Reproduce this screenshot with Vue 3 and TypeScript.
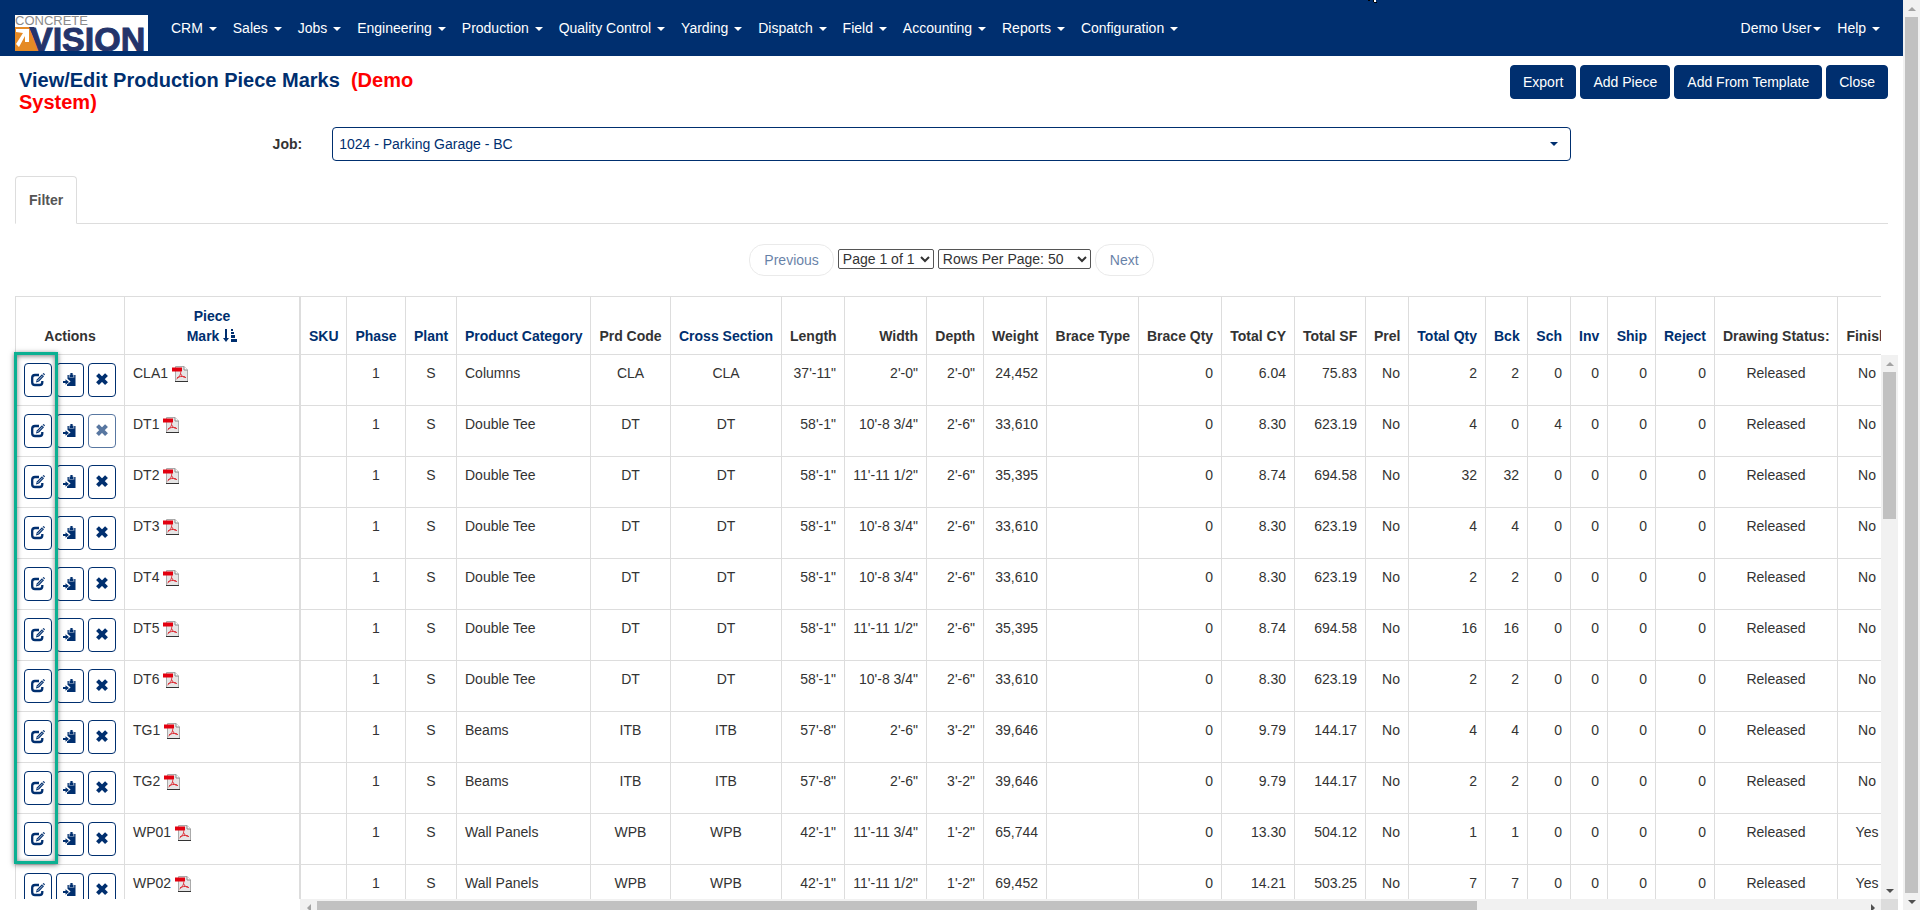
<script setup lang="ts">
type Align = 'left' | 'center' | 'right'

interface Column {
  title: string
  width: number
  align: Align
  sortable?: boolean
}

interface Piece {
  mark: string
  locked?: boolean
  cells: string[]
}

const menus: string[] = [
  'CRM', 'Sales', 'Jobs', 'Engineering', 'Production', 'Quality Control',
  'Yarding', 'Dispatch', 'Field', 'Accounting', 'Reports', 'Configuration',
]

const actions: string[] = ['Export', 'Add Piece', 'Add From Template', 'Close']

const columns: Column[] = [
  { title: 'SKU', width: 46, align: 'center', sortable: true },
  { title: 'Phase', width: 59, align: 'center', sortable: true },
  { title: 'Plant', width: 51, align: 'center', sortable: true },
  { title: 'Product Category', width: 134, align: 'left', sortable: true },
  { title: 'Prd Code', width: 80, align: 'center' },
  { title: 'Cross Section', width: 111, align: 'center', sortable: true },
  { title: 'Length', width: 63, align: 'right' },
  { title: 'Width', width: 82, align: 'right' },
  { title: 'Depth', width: 57, align: 'right' },
  { title: 'Weight', width: 63, align: 'right' },
  { title: 'Brace Type', width: 92, align: 'right' },
  { title: 'Brace Qty', width: 83, align: 'right' },
  { title: 'Total CY', width: 73, align: 'right' },
  { title: 'Total SF', width: 71, align: 'right' },
  { title: 'Prel', width: 43, align: 'right' },
  { title: 'Total Qty', width: 77, align: 'right', sortable: true },
  { title: 'Bck', width: 42, align: 'right', sortable: true },
  { title: 'Sch', width: 43, align: 'right', sortable: true },
  { title: 'Inv', width: 37, align: 'right', sortable: true },
  { title: 'Ship', width: 48, align: 'right', sortable: true },
  { title: 'Reject', width: 59, align: 'right', sortable: true },
  { title: 'Drawing Status:', width: 123, align: 'center' },
  { title: 'Finish', width: 59, align: 'center' },
]

const tableWidth = columns.reduce((sum, c) => sum + c.width, 1)

function piece(
  mark: string, category: string, code: string, dims: string[],
  cy: string, sf: string, qty: number[], finish = 'No', locked = false,
): Piece {
  const [length, width, depth, weight] = dims
  const [total, backlog, scheduled] = qty
  return {
    mark,
    locked,
    cells: [
      '', '1', 'S', category, code, code, length, width, depth, weight, '', '0',
      cy, sf, 'No', String(total), String(backlog), String(scheduled), '0', '0', '0',
      'Released', finish,
    ],
  }
}

const narrowTee = ['58\'-1"', '10\'-8 3/4"', '2\'-6"', '33,610']
const wideTee = ['58\'-1"', '11\'-11 1/2"', '2\'-6"', '35,395']
const girder = ['57\'-8"', '2\'-6"', '3\'-2"', '39,646']

const pieces: Piece[] = [
  piece('CLA1', 'Columns', 'CLA', ['37\'-11"', '2\'-0"', '2\'-0"', '24,452'], '6.04', '75.83', [2, 2, 0]),
  piece('DT1', 'Double Tee', 'DT', narrowTee, '8.30', '623.19', [4, 0, 4], 'No', true),
  piece('DT2', 'Double Tee', 'DT', wideTee, '8.74', '694.58', [32, 32, 0]),
  piece('DT3', 'Double Tee', 'DT', narrowTee, '8.30', '623.19', [4, 4, 0]),
  piece('DT4', 'Double Tee', 'DT', narrowTee, '8.30', '623.19', [2, 2, 0]),
  piece('DT5', 'Double Tee', 'DT', wideTee, '8.74', '694.58', [16, 16, 0]),
  piece('DT6', 'Double Tee', 'DT', narrowTee, '8.30', '623.19', [2, 2, 0]),
  piece('TG1', 'Beams', 'ITB', girder, '9.79', '144.17', [4, 4, 0]),
  piece('TG2', 'Beams', 'ITB', girder, '9.79', '144.17', [2, 2, 0]),
  piece('WP01', 'Wall Panels', 'WPB', ['42\'-1"', '11\'-11 3/4"', '1\'-2"', '65,744'], '13.30', '504.12', [1, 1, 0], 'Yes'),
  piece('WP02', 'Wall Panels', 'WPB', ['42\'-1"', '11\'-11 1/2"', '1\'-2"', '69,452'], '14.21', '503.25', [7, 7, 0], 'Yes'),
]
</script>

<template>
  <div class="window">
    <div class="page">
      <header class="navbar">
        <a href="#" class="logo" aria-label="Concrete Vision home">
          <svg width="133" height="36" viewBox="0 0 133 36" aria-hidden="true">
            <rect width="133" height="36" fill="#fff" />
            <text x="0" y="10" font-family="Liberation Sans, Arial, sans-serif" font-size="13" fill="#8a8a8a">CONCRETE</text>
            <path d="M0 12h17l7 24H0z" fill="#e58a25" />
            <path d="M1 17V14h13v13h-4v-6L4 32l-3-3 7-11z" fill="#fff" />
            <path d="M14 12h5l6 17v7z" fill="#24346b" />
            <text x="15" y="36" font-family="Liberation Sans, Arial, sans-serif" font-size="34" font-weight="700" fill="#24346b" stroke="#24346b">VISION</text>
          </svg>
        </a>
        <nav class="menu" aria-label="Main">
          <a v-for="m in menus" :key="m" href="#">{{ m }} <i class="caret"></i></a>
        </nav>
        <nav class="menu menu-user" aria-label="User">
          <a href="#">Demo User<i class="caret"></i></a>
          <a href="#">Help <i class="caret"></i></a>
        </nav>
        <svg class="pointer" width="9" height="3" viewBox="0 0 9 3" aria-hidden="true">
          <path d="M0 0h2v1H0zM5 0h1v2H5zM6 2h3v1H6z" fill="#000" />
          <path d="M6 0h2v2H6z" fill="#fff" />
        </svg>
      </header>

      <div class="title-row">
        <h1>View/Edit Production Piece Marks&nbsp; <span>(Demo System)</span></h1>
        <div class="toolbar">
          <button v-for="a in actions" :key="a" type="button" class="btn">{{ a }}</button>
        </div>
      </div>

      <div class="job-row">
        <label for="job">Job:</label>
        <div class="job-field">
          <select id="job">
            <option>1024 - Parking Garage - BC</option>
          </select>
          <i class="caret"></i>
        </div>
      </div>

      <div class="tabs"><a href="#" class="tab">Filter</a></div>

      <div class="pager">
        <button type="button" disabled>Previous</button>
        <select class="page-select" aria-label="Page"><option>Page 1 of 1</option></select>
        <select class="rows-select" aria-label="Rows per page"><option>Rows Per Page: 50</option></select>
        <button type="button" disabled>Next</button>
      </div>

      <div class="grid-area">
        <div class="frozen">
          <table>
            <colgroup><col class="col-actions"><col class="col-mark"></colgroup>
            <thead>
              <tr>
                <th scope="col">Actions</th>
                <th scope="col">
                  <a href="#">Piece<br>Mark
                    <svg class="sort" width="14" height="14" viewBox="0 0 14 14" aria-hidden="true">
                      <path d="M2 0h2v9h2l-3 4-3-4h2zM8 0h2v2H8zM8 3h3v2H8zM8 6h4v3H8zM8 10h6v3H8z" fill="currentColor" />
                    </svg>
                  </a>
                </th>
              </tr>
            </thead>
            <tbody>
              <tr v-for="p in pieces" :key="p.mark">
                <td>
                  <div class="row-actions">
                    <button type="button" :aria-label="`Edit ${p.mark}`">
                      <svg width="14" height="14" viewBox="0 0 14 14" aria-hidden="true">
                        <path d="M8 2H4Q1.200 2 1.200 4.800V9.200Q1.200 12 4 12H8.500Q11.300 12 11.300 9.200V8" fill="none" stroke="currentColor" stroke-width="2.300" />
                        <path d="M5 9.400l.8-3L11 1.200l2 2L8 8.600z" fill="currentColor" />
                        <path d="M11.700.8l.9-.8L14 1.300l-.7 1z" fill="currentColor" />
                        <path d="M6.400 8l5.200-5.300" stroke="#fff" stroke-width=".7" />
                      </svg>
                    </button>
                    <button type="button" :aria-label="`Copy ${p.mark}`">
                      <svg width="14" height="14" viewBox="0 0 14 14" aria-hidden="true">
                        <path d="M4.500 2h1.300v2.800h5.400V2h1.300v11H4v-1.400L7.600 8.600 4.500 5.800z" fill="currentColor" />
                        <path d="M6.500 4V1.800h.9V0h2.200v1.800h.9V4zM6 4.500h5v1.500H6z" fill="currentColor" />
                        <path d="M0 8h2.500V6.200L6 9l-3.500 2.800V10H0z" fill="currentColor" />
                      </svg>
                    </button>
                    <button type="button" :aria-label="`Delete ${p.mark}`" :disabled="p.locked">
                      <svg width="14" height="14" viewBox="0 0 14 14" aria-hidden="true">
                        <path d="M2.500 1.700l9 9M11.500 1.700l-9 9" stroke="currentColor" stroke-width="4" />
                      </svg>
                    </button>
                  </div>
                </td>
                <td class="mark">
                  {{ p.mark }}
                  <svg class="pdf" width="16" height="16" viewBox="0 0 16 16" aria-hidden="true">
                    <path d="M3.500.5H12L15.500 4v11.500H3.500z" fill="#e6e6e6" stroke="#aaa" />
                    <path d="M12 .5V4h3.500" fill="#fff" stroke="#888" />
                    <path d="M3 15.500h13" stroke="#333" />
                    <path d="M0 1.500h10v4H0z" fill="#e3000f" />
                    <path d="M8.500 5.500c.8 2.500-1.500 6-4 7.500M8.500 7.500c1 2.500 3 4 5.500 4M5 11.800c2.500-1.300 4.500-1.700 8-1" fill="none" stroke="#dd2a32" />
                  </svg>
                </td>
              </tr>
            </tbody>
          </table>
        </div>

        <div class="scroll-pane">
          <table :style="{ width: tableWidth + 'px' }">
            <colgroup><col v-for="c in columns" :key="c.title" :style="{ width: c.width + 'px' }"></colgroup>
            <thead>
              <tr>
                <th v-for="c in columns" :key="c.title" scope="col" :class="c.align">
                  <a v-if="c.sortable" href="#">{{ c.title }}</a>
                  <template v-else>{{ c.title }}</template>
                </th>
              </tr>
            </thead>
            <tbody>
              <tr v-for="p in pieces" :key="p.mark">
                <td v-for="(c, i) in columns" :key="c.title" :class="c.align">{{ p.cells[i] }}</td>
              </tr>
            </tbody>
          </table>
        </div>

        <div class="bar bar-y bar-rows" aria-hidden="true">
          <i class="arrow up dim"></i>
          <div class="thumb"></div>
          <i class="arrow down"></i>
        </div>
        <div class="bar bar-x" aria-hidden="true">
          <i class="arrow west dim"></i>
          <div class="thumb"></div>
          <i class="arrow east"></i>
        </div>
        <div class="corner"></div>
        <div class="highlight"></div>
      </div>
    </div>

    <div class="bar bar-y bar-window" aria-hidden="true">
      <i class="arrow up dim"></i>
      <div class="thumb"></div>
      <i class="arrow down"></i>
    </div>
  </div>
</template>

<style>
body {
  margin: 0;
  background: #fff;
}
</style>

<style scoped>
.window {
  --navy: #002f6f;
  --line: #ddd;
  display: grid;
  grid-template-columns: minmax(0, 1fr) 17px;
  height: 100vh;
  overflow: hidden;
  font: 14px/20px "Liberation Sans", Arial, sans-serif;
  color: #333;
}

.window *,
.window *::before {
  box-sizing: border-box;
}

a {
  color: var(--navy);
  text-decoration: none;
}

button,
select {
  font: inherit;
}

.page {
  display: flex;
  flex-direction: column;
  min-width: 0;
  min-height: 0;
}

.navbar {
  position: relative;
  display: flex;
  flex: none;
  height: 56px;
  padding: 0 15px;
  background: var(--navy);
}

.logo {
  margin: 15px 15px 0 0;
  height: 36px;
}

.logo svg {
  display: block;
}

.menu {
  display: flex;
  align-items: center;
  height: 56px;
  white-space: nowrap;
}

.menu a {
  padding: 0 8px;
  color: #fff;
}

.menu-user {
  margin-left: auto;
}

.caret {
  display: inline-block;
  margin-left: 2px;
  vertical-align: middle;
  border: 4px solid transparent;
  border-top-color: currentColor;
  border-bottom: 0;
}

.pointer {
  position: absolute;
  top: 0;
  left: 1368px;
}

.title-row {
  display: flex;
  justify-content: space-between;
  align-items: flex-start;
  padding: 9px 15px 0;
}

h1 {
  width: 24%;
  margin: 4px 0 0 4px;
  font-size: 20px;
  line-height: 22px;
  color: var(--navy);
}

h1 span {
  color: #f00;
}

.toolbar {
  display: flex;
  gap: 4px;
}

.btn {
  height: 34px;
  padding: 0 12px;
  border: 1px solid var(--navy);
  border-radius: 4px;
  background: var(--navy);
  color: #fff;
}

.job-row {
  display: grid;
  grid-template-columns: 2fr 8fr 2fr;
  align-items: center;
  margin-top: 14px;
}

.job-row label {
  padding-right: 15px;
  text-align: right;
  font-weight: 700;
}

.job-field {
  position: relative;
  margin: 0 15px;
}

.job-field select {
  display: block;
  width: 100%;
  height: 34px;
  padding: 0 24px 0 6px;
  appearance: none;
  border: 1px solid var(--navy);
  border-radius: 4px;
  background: #fff;
  color: var(--navy);
}

.job-field .caret {
  position: absolute;
  top: 15px;
  right: 13px;
  color: var(--navy);
}

.tabs {
  display: flex;
  height: 48px;
  margin: 15px 15px 0;
  border-bottom: 1px solid var(--line);
}

.tab {
  height: 48px;
  padding: 13px;
  border: 1px solid var(--line);
  border-bottom-color: #fff;
  border-radius: 4px 4px 0 0;
  background: #fff;
  color: #555;
  font-weight: 700;
}

.pager {
  display: flex;
  justify-content: center;
  gap: 4px;
  padding: 20px 0;
}

.pager button {
  height: 32px;
  padding: 0 14px;
  border: 1px solid var(--line);
  border-radius: 15px;
  background: #fff;
  color: var(--navy);
  opacity: .6;
}

.pager select {
  height: 20px;
  margin-top: 5px;
  padding: 0;
  border: 1px solid #555;
  border-radius: 2px;
  background: #fff;
  color: #333;
}

.page-select {
  width: 96px;
}

.rows-select {
  width: 153px;
}

.grid-area {
  position: relative;
  display: grid;
  flex: 1;
  grid-template-columns: 285px minmax(0, 1fr) 17px;
  grid-template-rows: minmax(0, 1fr) 17px;
  min-height: 0;
  margin: 0 5px -6px 15px;
}

.frozen,
.scroll-pane {
  overflow: hidden;
}

table {
  width: 100%;
  table-layout: fixed;
  border-collapse: separate;
  border-spacing: 0;
  border-left: 1px solid var(--line);
}

.col-actions {
  width: 109px;
}

.col-mark {
  width: 175px;
}

th,
td {
  padding: 8px;
  border-right: 1px solid var(--line);
  border-bottom: 1px solid var(--line);
  white-space: nowrap;
}

th {
  height: 59px;
  border-top: 1px solid var(--line);
  vertical-align: bottom;
  text-align: center;
}

td {
  height: 51px;
  vertical-align: top;
}

.left {
  text-align: left;
}

.center {
  text-align: center;
}

.right {
  text-align: right;
}

.sort {
  display: inline-block;
  vertical-align: -2px;
}

.row-actions {
  display: flex;
  gap: 4px;
}

.row-actions button {
  display: grid;
  place-items: center;
  width: 28px;
  height: 34px;
  padding: 0;
  border: 1px solid var(--navy);
  border-radius: 4px;
  background: #fff;
  color: var(--navy);
}

.row-actions button:disabled {
  opacity: .65;
}

.pdf {
  vertical-align: -4px;
}

.highlight {
  position: absolute;
  top: 56px;
  left: -1px;
  width: 44px;
  height: 512px;
  border: 3px solid #0bb092;
  box-shadow: 0 1px 5px rgb(0 0 0 / 50%), inset 0 1px 5px rgb(0 0 0 / 50%);
  pointer-events: none;
}

.bar {
  display: flex;
  background: #f1f1f1;
}

.bar-y {
  flex-direction: column;
}

.bar-rows {
  margin-top: 59px;
}

.bar-x {
  grid-column: 2;
}

.corner {
  background: #dcdcdc;
}

.thumb {
  background: #c1c1c1;
}

.bar-y .thumb {
  margin: 0 2px;
}

.bar-rows .thumb {
  flex: 0 0 27%;
}

.bar-window .thumb {
  flex: 1;
}

.bar-x .thumb {
  flex: 0 0 1160px;
  flex-basis: 73.4%;
  margin: 2px 0;
}

.bar-rows .down {
  margin-top: auto;
}

.bar-x .east {
  margin-left: auto;
}

.arrow {
  display: grid;
  flex: none;
  place-items: center;
  width: 17px;
  height: 17px;
  color: #505050;
}

.arrow::before {
  content: "";
  border: 4px solid transparent;
}

.dim {
  color: #a3a3a3;
}

.up::before {
  border-top: 0;
  border-bottom-color: currentColor;
}

.down::before {
  border-bottom: 0;
  border-top-color: currentColor;
}

.west::before {
  border-left: 0;
  border-right-color: currentColor;
}

.east::before {
  border-right: 0;
  border-left-color: currentColor;
}
</style>
